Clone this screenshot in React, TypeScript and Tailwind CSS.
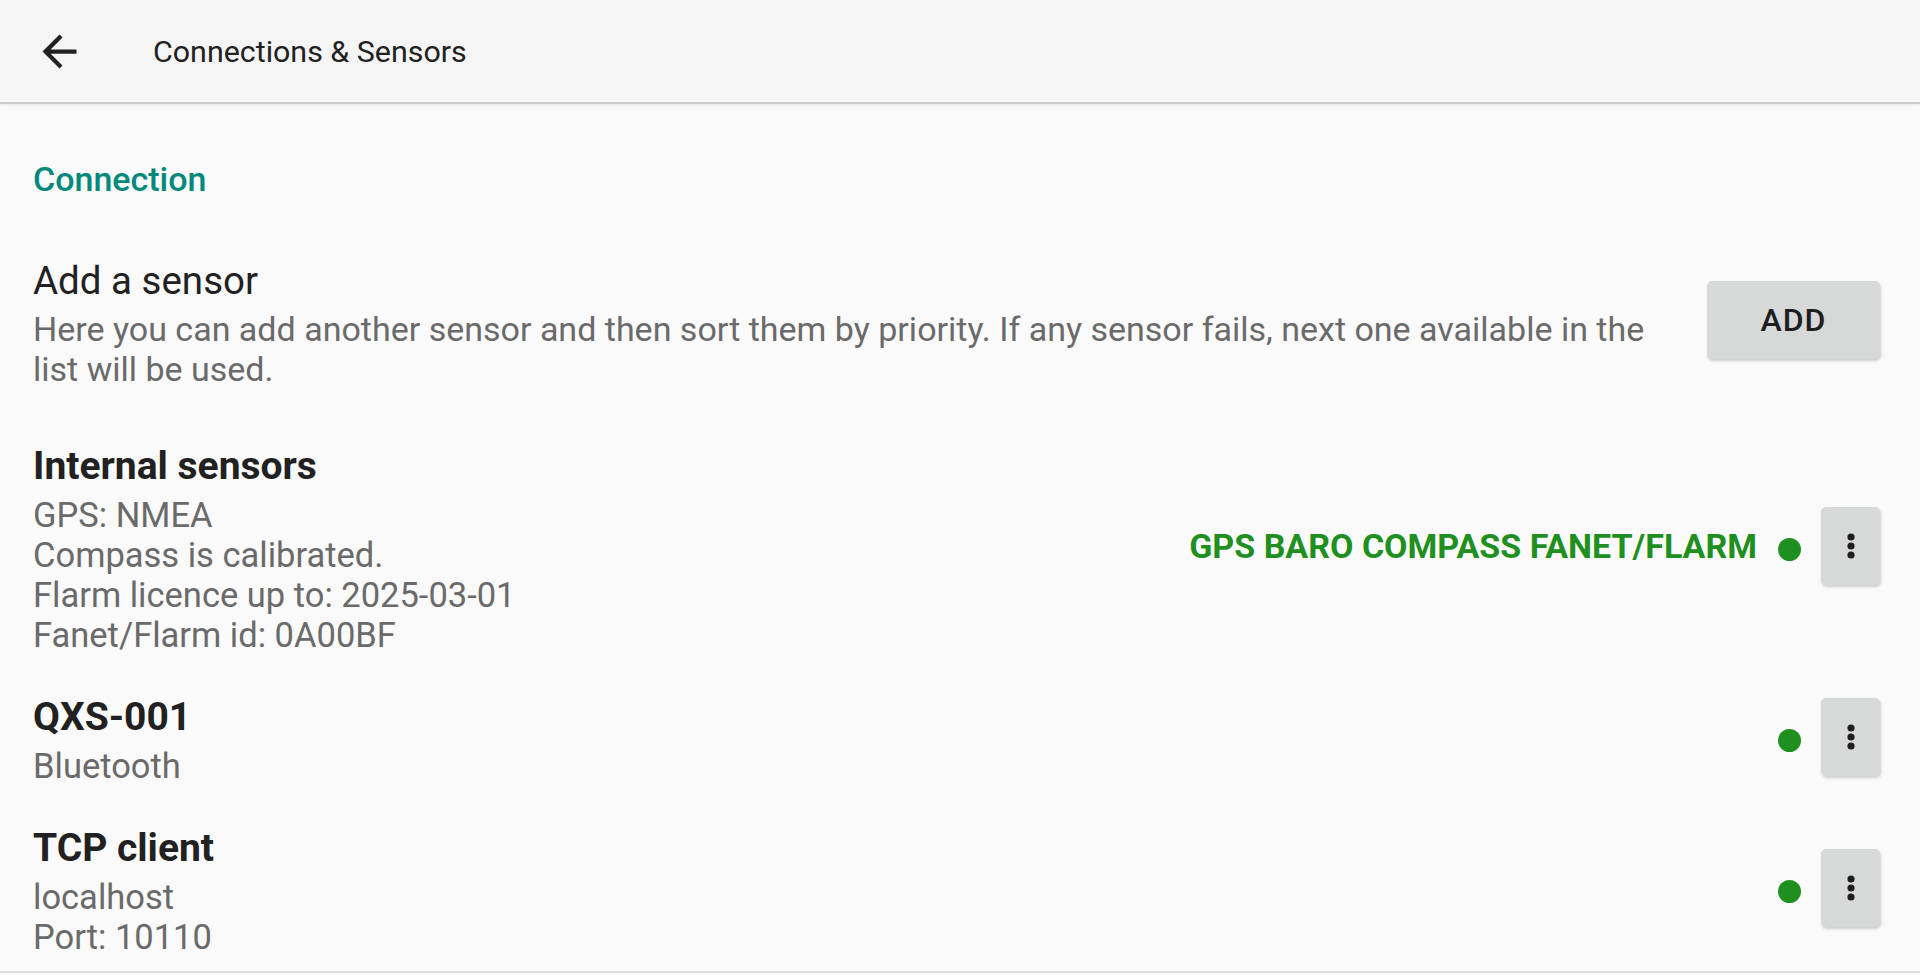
import type { ReactNode } from 'react';

type Sensor = {
  name: string;
  lines: string[];
  caps?: string;
};

const sensors: Sensor[] = [
  {
    name: 'Internal sensors',
    lines: ['GPS: NMEA', 'Compass is calibrated.', 'Flarm licence up to: 2025-03-01', 'Fanet/Flarm id: 0A00BF'],
    caps: 'GPS BARO COMPASS FANET/FLARM',
  },
  { name: 'QXS-001', lines: ['Bluetooth'] },
  { name: 'TCP client', lines: ['localhost', 'Port: 10110'] },
];

function BackArrow() {
  return (
    <svg
      className="h-[51px] w-[51px] text-[#212121]"
      fill="currentColor"
      viewBox="0 0 24 24"
    >
      <path d="M20 11H7.83l5.59-5.59L12 4l-8 8 8 8 1.41-1.41L7.83 13H20v-2z" />
    </svg>
  );
}

function MenuButton() {
  return (
    <button
      className="flex h-[78px] w-[59px] items-center justify-center rounded-[5px] bg-[#d7d8d8] shadow-[1px_2px_3px_rgba(0,0,0,0.18)]"
      type="button"
    >
      <svg
        className="h-[30px] w-[10px] text-[#1e1e1e]"
        fill="currentColor"
        viewBox="0 0 10 30"
      >
        <circle cx="5" cy="6" r="3.6" />
        <circle cx="5" cy="15" r="3.6" />
        <circle cx="5" cy="24" r="3.6" />
      </svg>
    </button>
  );
}

function SensorRow({ sensor, first }: { sensor: Sensor; first: boolean }) {
  return (
    <div className={`flex items-center ${first ? 'mt-[54px]' : 'mt-[39px]'}`}>
      <div className="flex-1">
        <div className="text-[39px] font-bold leading-[46px] text-[#212121]">{sensor.name}</div>
        <div className="mt-[6px] text-[34.5px] leading-[40px] text-[#6a6a6a]">
          {sensor.lines.map((line) => (
            <div key={line}>{line}</div>
          ))}
        </div>
      </div>
      <div className="mb-[6px] flex items-center">
        {sensor.caps && <span className="mr-[21px] text-[34px] font-bold text-[#1f8f1f]">{sensor.caps}</span>}
        <span className="mr-[20px] mt-[6px] h-[23px] w-[23px] rounded-full bg-[#1f8f1f]" />
        <MenuButton />
      </div>
    </div>
  );
}

function Category({ children }: { children: ReactNode }) {
  return <div className="text-[34px] font-medium leading-[40px] text-[#00897b]">{children}</div>;
}

export default function App() {
  return (
    <div className="flex h-[975px] w-full flex-col overflow-hidden bg-[#fafafa] font-['Roboto',sans-serif]">
      <header className="flex h-[104px] shrink-0 items-center border-b-2 border-[#cdcdcd] bg-[#f5f5f5] shadow-[0_1px_3px_rgba(0,0,0,0.08)]">
        <div className="ml-[34px] flex">
          <BackArrow />
        </div>
        <h1 className="ml-[68px] mt-[2px] text-[30.4px] leading-none text-[#212121]">Connections &amp; Sensors</h1>
      </header>

      <main className="flex-1 pl-[33px] pr-[40px] pt-[55px]">
        <Category>Connection</Category>

        <div className="mt-[59px] flex items-center gap-[40px]">
          <div className="flex-1">
            <div className="text-[38.5px] leading-[46px] text-[#212121]">Add a sensor</div>
            <div className="mt-[5px] text-[34px] leading-[40px] text-[#6a6a6a]">
              Here you can add another sensor and then sort them by priority. If any sensor fails, next one available in the
              list will be used.
            </div>
          </div>
          <button
            className="mb-[7px] h-[78px] w-[173px] rounded-[5px] bg-[#d7d8d8] text-[32px] font-medium tracking-[0.03em] text-[#1e1e1e] shadow-[1px_2px_3px_rgba(0,0,0,0.18)]"
            type="button"
          >
            ADD
          </button>
        </div>

        {sensors.map((sensor, i) => (
          <SensorRow
            first={i === 0}
            key={sensor.name}
            sensor={sensor}
          />
        ))}
      </main>

      <div className="h-[4px] shrink-0 border-t-2 border-[#dcdcdc] bg-[#fafafa]" />
    </div>
  );
}
